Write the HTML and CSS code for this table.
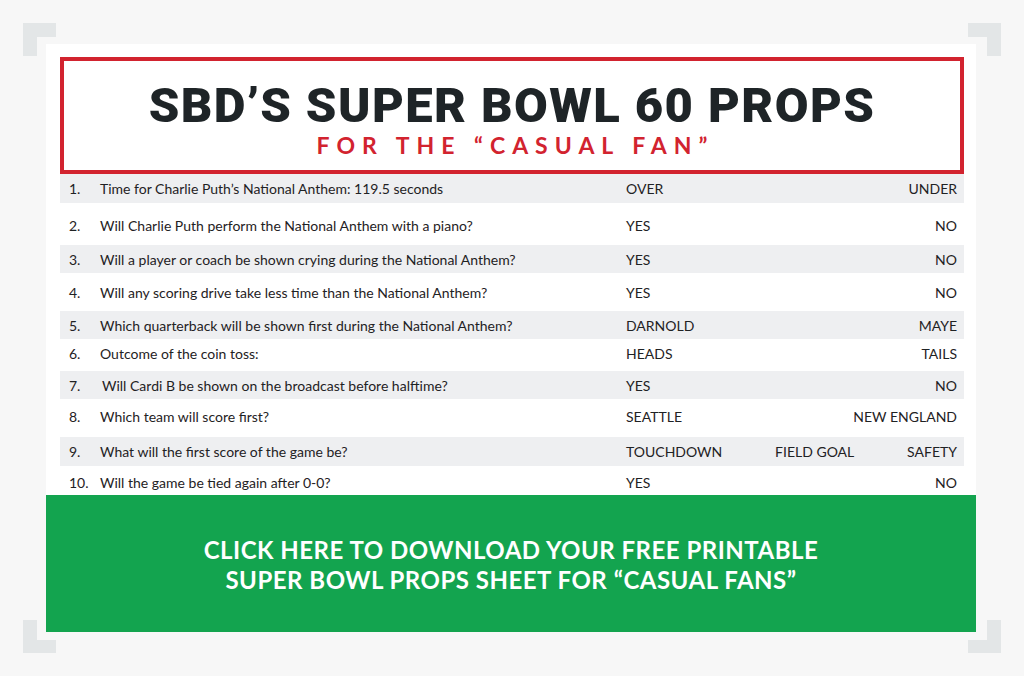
FILE: index.html
```html
<!DOCTYPE html>
<html lang="en">
<head>
<meta charset="utf-8">
<title>SBD's Super Bowl 60 Props</title>
<link rel="stylesheet" href="styles.css">
</head>
<body>
<div class="frame">
  <span class="corner tl"></span>
  <span class="corner tr"></span>
  <span class="corner bl"></span>
  <span class="corner br"></span>
  <div class="card">
    <header class="title-box">
      <h1 class="title">SBD’S SUPER BOWL 60 PROPS</h1>
      <p class="subtitle">FOR THE “CASUAL FAN”</p>
    </header>
    <div class="props">
      <div class="row"><span class="num">1.</span><span class="q">Time for Charlie Puth’s National Anthem: 119.5 seconds</span><div class="opts"><span>OVER</span><span>UNDER</span></div></div>
      <div class="row"><span class="num">2.</span><span class="q">Will Charlie Puth perform the National Anthem with a piano?</span><div class="opts"><span>YES</span><span>NO</span></div></div>
      <div class="row"><span class="num">3.</span><span class="q">Will a player or coach be shown crying during the National Anthem?</span><div class="opts"><span>YES</span><span>NO</span></div></div>
      <div class="row"><span class="num">4.</span><span class="q">Will any scoring drive take less time than the National Anthem?</span><div class="opts"><span>YES</span><span>NO</span></div></div>
      <div class="row"><span class="num">5.</span><span class="q">Which quarterback will be shown first during the National Anthem?</span><div class="opts"><span>DARNOLD</span><span>MAYE</span></div></div>
      <div class="row"><span class="num">6.</span><span class="q">Outcome of the coin toss:</span><div class="opts"><span>HEADS</span><span>TAILS</span></div></div>
      <div class="row"><span class="num">7.</span><span class="q shift">Will Cardi B be shown on the broadcast before halftime?</span><div class="opts"><span>YES</span><span>NO</span></div></div>
      <div class="row"><span class="num">8.</span><span class="q">Which team will score first?</span><div class="opts"><span>SEATTLE</span><span>NEW ENGLAND</span></div></div>
      <div class="row"><span class="num">9.</span><span class="q">What will the first score of the game be?</span><div class="opts"><span>TOUCHDOWN</span><span>FIELD GOAL</span><span>SAFETY</span></div></div>
      <div class="row"><span class="num">10.</span><span class="q">Will the game be tied again after 0-0?</span><div class="opts"><span>YES</span><span>NO</span></div></div>
    </div>
    <a class="cta" href="#">CLICK HERE TO DOWNLOAD YOUR FREE PRINTABLE<br>SUPER BOWL PROPS SHEET FOR “CASUAL FANS”</a>
  </div>
</div>
</body>
</html>
```

FILE: styles.css
```css
* { box-sizing: border-box; }
html, body { margin: 0; padding: 0; }
body {
  background: #f7f7f7;
  font-family: "Lato", "Liberation Sans", sans-serif;
  color: #1f2224;
  width: 1024px;
  height: 676px;
  overflow: hidden;
}
.frame {
  position: relative;
  width: 1024px;
  height: 676px;
  padding: 44px 48px 44px 46px;
}
.corner {
  position: absolute;
  width: 33px;
  height: 33px;
  border-color: #e3e6e7;
  border-style: solid;
  border-width: 0;
}
.corner.tl { left: 23px; top: 23px; border-left-width: 14px; border-top-width: 14px; }
.corner.tr { right: 23px; top: 23px; border-right-width: 14px; border-top-width: 14px; }
.corner.bl { left: 23px; bottom: 23px; border-left-width: 14px; border-bottom-width: 13px; }
.corner.br { right: 23px; bottom: 23px; border-right-width: 14px; border-bottom-width: 13px; }
.card {
  position: relative;
  background: #fff;
  width: 930px;
  height: 588px;
  padding-top: 13px;
  display: flex;
  flex-direction: column;
}
.title-box {
  margin: 0 12px 0 14px;
  height: 117px;
  border: 4px solid #d2232f;
  display: flex;
  flex-direction: column;
  align-items: center;
  padding-top: 25px;
}
.title {
  margin: 0;
  font-family: "Roboto", "DejaVu Sans", sans-serif;
  font-weight: 900;
  font-size: 49px;
  line-height: 40px;
  letter-spacing: 1.4px;
  color: #1e2427;
}
.subtitle {
  margin: 7px 0 0;
  font-family: "Lato", sans-serif;
  font-weight: 700;
  font-size: 23px;
  line-height: 24px;
  letter-spacing: 7px;
  padding-left: 7px;
  color: #d2232f;
}
.props {
  margin: 0 12px 0 14px;
  display: flex;
  flex-direction: column;
}
.row {
  display: flex;
  align-items: center;
  padding: 0 7px 0 9px;
  font-size: 14px;
  color: #1f2224;
}
.row:nth-child(odd) { background: #eeeff1; }
.row:nth-child(1) { height: 29px; }
.row:nth-child(2) { height: 42px; padding-top: 2px; }
.row:nth-child(3) { height: 28px; }
.row:nth-child(4) { height: 38px; }
.row:nth-child(5) { height: 28px; }
.row:nth-child(6) { height: 32px; padding-bottom: 4px; }
.row:nth-child(7) { height: 28px; }
.row:nth-child(8) { height: 38px; padding-bottom: 4px; }
.row:nth-child(9) { height: 29px; }
.row:nth-child(10) { height: 29px; padding-top: 4px; }
.num { width: 31px; flex: none; }
.q { flex: 1; }
.q.shift { padding-left: 2px; }
.opts {
  width: 331px;
  flex: none;
  display: flex;
  justify-content: space-between;
}
.cta {
  margin-top: auto;
  height: 137px;
  background: #13a44f;
  color: #fff;
  text-decoration: none;
  font-family: "Lato", sans-serif;
  font-weight: 700;
  font-size: 24px;
  line-height: 30px;
  letter-spacing: 0.5px;
  display: flex;
  align-items: center;
  justify-content: center;
  text-align: center;
  padding-top: 2px;
}
```
